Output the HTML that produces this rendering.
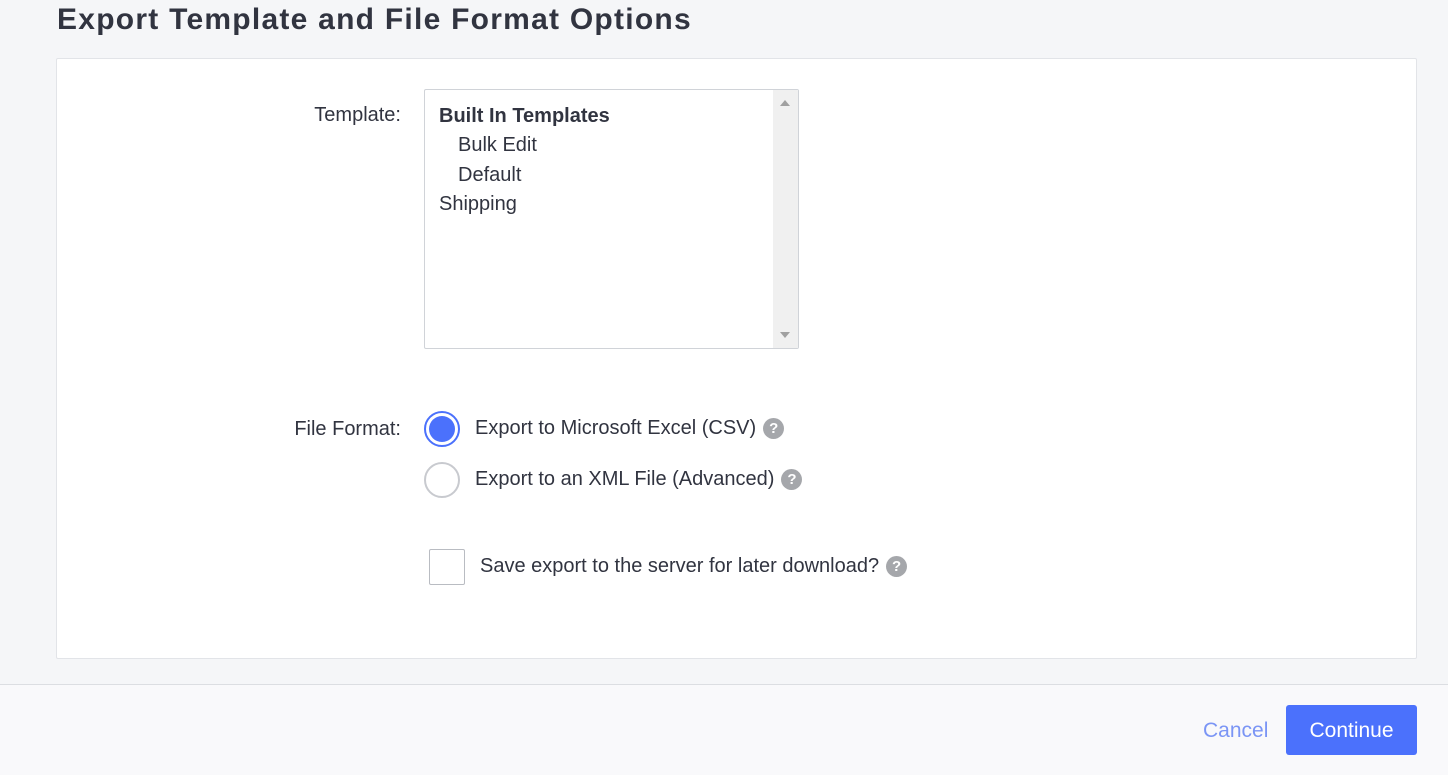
<!DOCTYPE html>
<html><head><style>
body{margin:0;width:1448px;height:774px;background:#f5f6f8;font-family:"Liberation Sans",sans-serif;color:#313440;position:relative;overflow:hidden}
.a{position:absolute}
h1{position:absolute;left:57px;top:3px;margin:0;font-size:30px;font-weight:bold;color:#313440;letter-spacing:1.25px}
.card{left:56px;top:58px;width:1359px;height:599px;background:#fff;border:1px solid #e2e4e8;border-radius:2px}
.lbl{font-size:20px;color:#313440}
.rl{width:300px;text-align:right;left:101px}
.list{left:424px;top:89px;width:373px;height:258px;border:1px solid #d0d3d8;border-radius:2px;background:#fff}
.sb{position:absolute;right:0;top:0;width:25px;height:100%;background:#f0f0f0}
.it{position:absolute;font-size:20px;left:14px}
.radio{width:36px;height:36px;border:2px solid #c8cacf;border-radius:50%;box-sizing:border-box;background:#fff}
.q{display:inline-block;width:21px;height:21px;border-radius:50%;background:#a5a7ab;color:#fff;font-size:15px;font-weight:bold;text-align:center;line-height:21px;vertical-align:middle;margin-left:7px}
.footer{left:0;top:684px;width:1448px;height:90px;background:#f9f9fb;border-top:1px solid #dcdee2}
.btn{left:1286px;top:705px;width:131px;height:50px;background:#4b71fc;border-radius:3px;color:#fff;font-size:21px;text-align:center;line-height:52px}
</style></head><body>
<h1>Export Template and File Format Options</h1>
<div class="a card"></div>
<div class="a lbl rl" style="top:104px">Template:</div>
<div class="a list"><div class="sb">
<div style="position:absolute;left:7px;top:10px;width:0;height:0;border-left:5px solid transparent;border-right:5px solid transparent;border-bottom:6px solid #a0a0a0"></div>
<div style="position:absolute;left:7px;bottom:10px;width:0;height:0;border-left:5px solid transparent;border-right:5px solid transparent;border-top:6px solid #a0a0a0"></div></div>
<div class="it" style="top:15px;font-weight:bold">Built In Templates</div>
<div class="it" style="top:44px;left:33px">Bulk Edit</div>
<div class="it" style="top:74px;left:33px">Default</div>
<div class="it" style="top:103px">Shipping</div>
</div>
<div class="a lbl rl" style="top:418px">File Format:</div>
<div class="a radio" style="left:424px;top:411px;border-color:#4b71fc;display:flex;align-items:center;justify-content:center"><div style="width:26px;height:26px;border-radius:50%;background:#4b71fc"></div></div>
<div class="a lbl" style="left:475px;top:417px">Export to Microsoft Excel (CSV)<span class="q">?</span></div>
<div class="a radio" style="left:424px;top:462px"></div>
<div class="a lbl" style="left:475px;top:468px">Export to an XML File (Advanced)<span class="q">?</span></div>
<div class="a" style="left:429px;top:549px;width:36px;height:36px;border:1px solid #b9bcc2;border-radius:2px;box-sizing:border-box;background:#fff"></div>
<div class="a lbl" style="left:480px;top:555px">Save export to the server for later download?<span class="q">?</span></div>
<div class="a footer"></div>
<div class="a" style="left:1203px;top:719px;font-size:21px;color:#7b95f5">Cancel</div>
<div class="a btn">Continue</div>
</body></html>
